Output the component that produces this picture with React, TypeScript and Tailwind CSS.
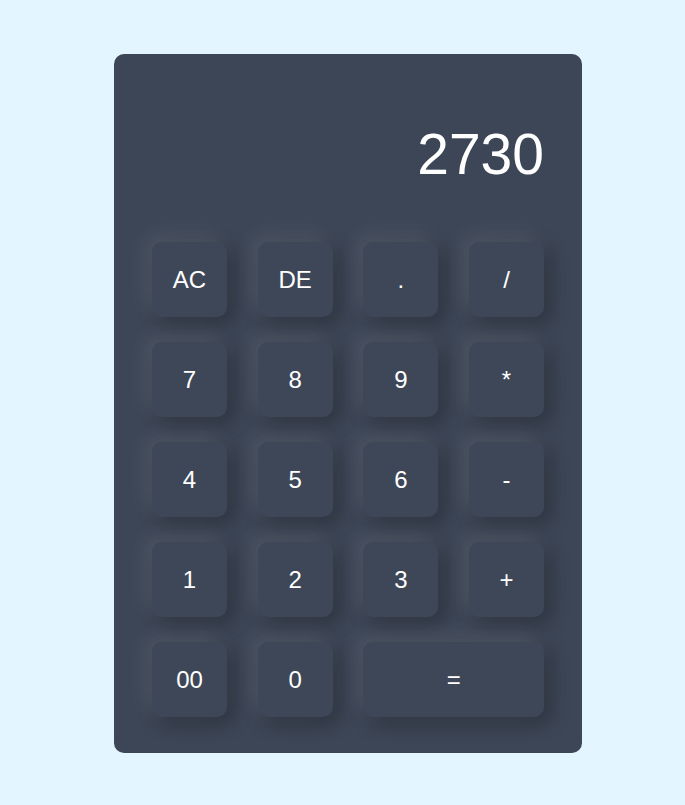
const keys = [
  { label: "AC" },
  { label: "DE" },
  { label: "." },
  { label: "/" },
  { label: "7" },
  { label: "8" },
  { label: "9" },
  { label: "*" },
  { label: "4" },
  { label: "5" },
  { label: "6" },
  { label: "-" },
  { label: "1" },
  { label: "2" },
  { label: "3" },
  { label: "+" },
  { label: "00" },
  { label: "0" },
  { label: "=", wide: true },
];

const App = () => {
  return (
    <div className="min-h-screen bg-[#e3f6ff] flex justify-center pl-[11px] pt-[54px] font-['Liberation_Sans',Arial,sans-serif]">
      <div className="w-[468px] h-[699px] bg-[#3d4656] rounded-[10px] px-[38px] pb-[36px] flex flex-col">
        <div className="h-[188px] pt-[12px] flex items-center justify-end">
          <span className="text-white text-[57px] leading-none">2730</span>
        </div>
        <div className="grid grid-cols-[75px_75px_75px_75px] justify-between gap-y-[25px]">
          {keys.map((k) => (
            <button
              key={k.label}
              className={
                "h-[75px] rounded-[10px] bg-[#3e4757] text-white text-2xl flex items-center justify-center shadow-[-6px_-6px_20px_rgba(255,255,255,0.1),6px_6px_20px_rgba(0,0,0,0.3)] " +
                (k.wide ? "col-span-2" : "w-[75px]")
              }
            >
              {k.label}
            </button>
          ))}
        </div>
      </div>
    </div>
  );
};

export default App;
